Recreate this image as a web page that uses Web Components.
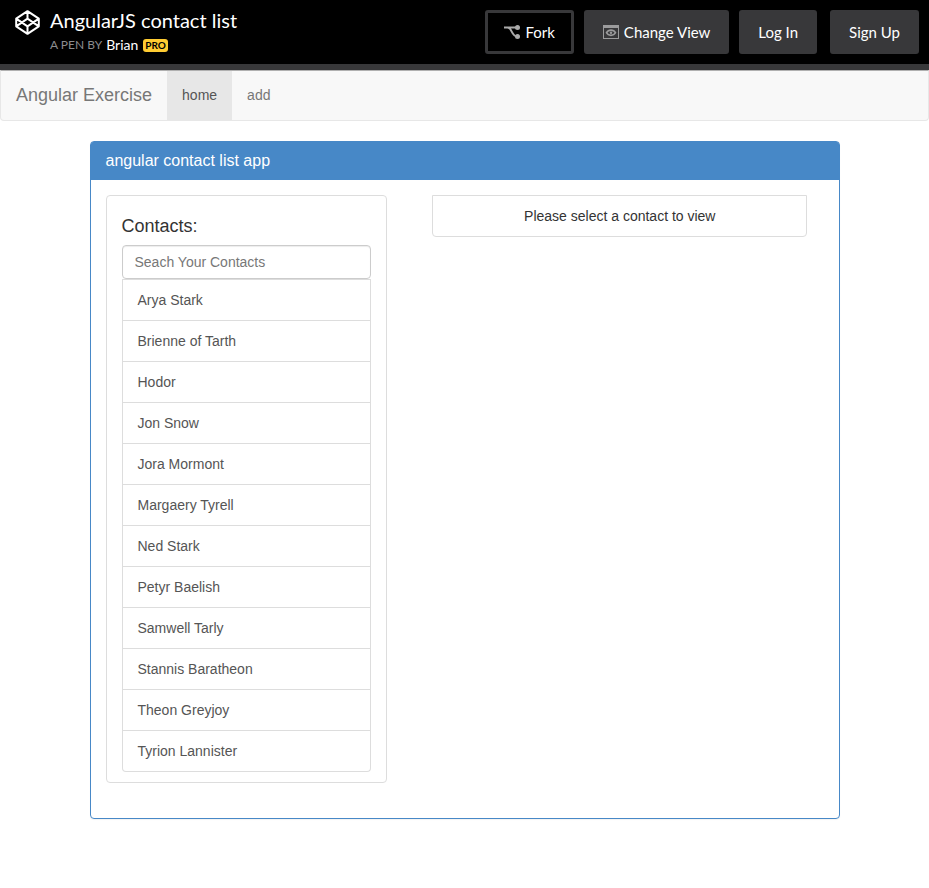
<!DOCTYPE html>
<html lang="en">
<head>
<meta charset="utf-8">
<meta name="viewport" content="width=device-width, initial-scale=1">
<title>AngularJS contact list</title>
<style>
  body { margin: 0; background: #fff; color: #333; font: 14px/20px "Liberation Sans", Arial, sans-serif; }
</style>
</head>
<body>
<pen-header></pen-header>
<nav-bar></nav-bar>
<app-panel heading="angular contact list app">
  <contact-list></contact-list>
  <contact-view>Please select a contact to view</contact-view>
</app-panel>
<script>
const define = (name, html, setup) => customElements.define(name, class extends HTMLElement {
  connectedCallback() {
    if (this.shadowRoot) return;
    const t = document.createElement('template');
    t.innerHTML = '<style>:host, * { box-sizing: border-box }</style>' + html;
    this.attachShadow({ mode: 'open' }).append(t.content.cloneNode(true));
    if (setup) setup(this, this.shadowRoot);
  }
});

define('pen-button', `
  <style>
    :host { display: block; }
    button { display: flex; align-items: center; gap: 5px; height: 44px; padding: 0 16px; margin: 0;
      border: 3px solid #38383a; border-radius: 3px; background: #38383a; color: #fff;
      font: 15px/20px Lato, sans-serif; white-space: nowrap; cursor: pointer; }
    :host([outline]) button { background: #000; }
  </style>
  <button type="button"><slot name="icon"></slot><span><slot></slot></span></button>`);

define('pen-header', `
  <style>
    :host { display: flex; justify-content: space-between; align-items: flex-start; height: 70px;
      padding: 10px 10px 0 15px; background: #000; border-bottom: 6px solid #38383a; color: #fff;
      font-family: Lato, sans-serif; }
    .brand { display: flex; gap: 10px; }
    .brand a { color: #fff; text-decoration: none; }
    .logo { display: block; width: 25px; height: 25px; }
    svg { display: block; }
    h1 { margin: 0; font-size: 20px; line-height: 20px; font-weight: 400; }
    .by { display: flex; align-items: center; margin-top: 6px; font-size: 14px; line-height: 18px; }
    .by small { margin-right: 4px; color: #8c8c8f; font-size: 12px; }
    .pro { margin-left: 5px; padding: 0 2px; border-radius: 3px; background: #ffcc32;
      color: #000; font-size: 10px; line-height: 13px; font-weight: 700; }
    .actions { display: flex; gap: 10px; }
    .actions pen-button:last-child { margin-left: 3px; }
  </style>
  <div class="brand">
    <a class="logo" href="#" aria-label="Home">
      <svg width="25" height="25" viewBox="0 0 25 25" fill="none" stroke="#fff" stroke-width="2" stroke-linejoin="round">
        <path d="M12.500 1.200 23.800 8.700V16.300L12.500 23.800 1.200 16.300V8.700ZM12.500 1.200V8.700M12.500 16.300V23.800M1.200 8.700 12.500 16.300 23.800 8.700M1.200 16.300 12.500 8.700 23.800 16.300"/>
      </svg>
    </a>
    <div>
      <h1>AngularJS contact list</h1>
      <div class="by"><small>A PEN BY</small><a href="#">Brian</a><span class="pro">PRO</span></div>
    </div>
  </div>
  <div class="actions">
    <pen-button outline>
      <svg slot="icon" width="16" height="14" viewBox="0 0 16 14" fill="none" stroke="#aaa" stroke-width="2">
        <path d="M0 2.500H12M3.500 2.500C8 2.500 7.500 11.500 13 11.500"/>
        <circle cx="13.500" cy="2.500" r="2.500" fill="#aaa" stroke="none"/><circle cx="13.500" cy="11.500" r="2.500" fill="#aaa" stroke="none"/>
      </svg>Fork</pen-button>
    <pen-button>
      <svg slot="icon" width="16" height="14" viewBox="0 0 16 14" fill="none" stroke="#9b9b9c">
        <path d="M0 0H16V14H0ZM1 3V13H15V3Z" fill="#9b9b9c" fill-rule="evenodd" stroke="none"/>
        <path d="M3.500 7.700C5.500 4.200 10.500 4.200 12.500 7.700 10.500 11.200 5.500 11.200 3.500 7.700Z" stroke-width="1.600"/>
        <circle cx="8" cy="7.700" r="1.200" fill="#9b9b9c" stroke="none"/>
      </svg>Change View</pen-button>
    <pen-button>Log In</pen-button>
    <pen-button>Sign Up</pen-button>
  </div>`);

define('nav-bar', `
  <style>
    :host { display: block; }
    nav { display: flex; height: 51px; border: 1px solid #e7e7e7; border-top-color: #b0b0b0;
      border-radius: 0 0 4px 4px; background: #f8f8f8; }
    a { padding: 14px 15px 15px; color: #777; text-decoration: none; line-height: 20px; }
    .title { font-size: 18px; }
    .active { background: #e7e7e7; color: #555; }
  </style>
  <nav>
    <a class="title" href="#">Angular Exercise</a>
    <a class="active" href="#home" aria-current="page">home</a>
    <a href="#add">add</a>
  </nav>`);

define('app-panel', `
  <style>
    :host { display: block; max-width: 750px; margin: 20px auto; border: 1px solid #4788c7;
      border-radius: 4px; box-shadow: 0 1px 1px rgba(0,0,0,.05); }
    h2 { margin: 0; padding: 9px 15px 10px; background: #4788c7; color: #fff; border-radius: 2px 2px 0 0;
      font-size: 16px; line-height: 19px; font-weight: 400; }
    .body { display: grid; grid-template-columns: 3fr 4fr; gap: 45px; align-items: start; padding: 15px 31px 35px 15px; }
  </style>
  <h2></h2>
  <div class="body"><slot></slot></div>`,
  (host, root) => { root.querySelector('h2').textContent = host.getAttribute('heading'); });

define('contact-item', `
  <style>
    :host { display: block; border: 1px solid #ddd; border-top-width: 0; }
    :host(:first-child) { border-top-width: 1px; }
    :host(:last-child) { border-radius: 0 0 4px 4px; }
    a { display: block; padding: 10px 15px; color: #555; text-decoration: none; }
  </style>
  <a href="#"><slot></slot></a>`);

define('contact-list', `
  <style>
    :host { display: block; padding: 20px 15px 10px; border: 1px solid #ddd; border-radius: 4px; }
    label { display: block; margin-bottom: 9px; font-size: 18px; line-height: 20px; }
    input { display: block; width: 100%; height: 34px; margin: 0; padding: 6px 12px; border: 1px solid #ccc;
      border-radius: 4px; background: #fff; box-shadow: inset 0 1px 1px rgba(0,0,0,.075); color: #555;
      font: inherit; line-height: 20px; }
    input::placeholder { color: #777; opacity: 1; }
  </style>
  <label for="search">Contacts:</label>
  <input id="search" type="text" placeholder="Seach Your Contacts">
  <div class="items"></div>`,
  (host, root) => {
    const names = ['Arya Stark', 'Brienne of Tarth', 'Hodor', 'Jon Snow', 'Jora Mormont', 'Margaery Tyrell',
      'Ned Stark', 'Petyr Baelish', 'Samwell Tarly', 'Stannis Baratheon', 'Theon Greyjoy', 'Tyrion Lannister'];
    const items = names.map(name => {
      const el = document.createElement('contact-item');
      el.textContent = name;
      return el;
    });
    root.querySelector('.items').append(...items);
    root.querySelector('input').addEventListener('input', e => {
      const q = e.target.value.toLowerCase();
      items.forEach(el => { el.style.display = el.textContent.toLowerCase().includes(q) ? '' : 'none'; });
    });
  });

define('contact-view', `
  <style>
    :host { display: block; padding: 10px 15px; border: 1px solid #ddd; border-radius: 0 0 4px 4px; text-align: center; }
  </style>
  <slot></slot>`);
</script>
</body>
</html>
